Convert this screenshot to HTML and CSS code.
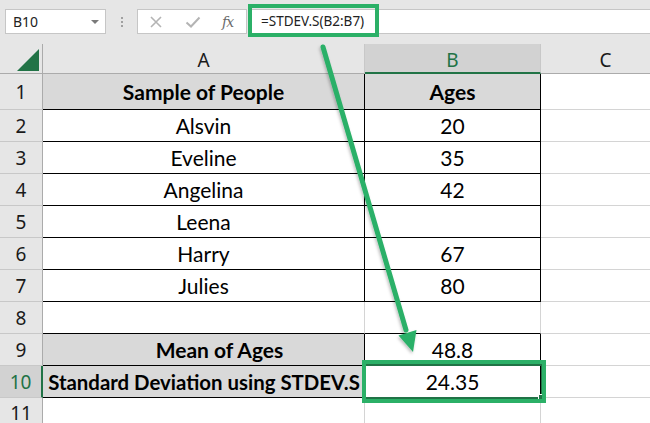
FILE: index.html
```html
<!DOCTYPE html>
<html>
<head>
<meta charset="utf-8">
<link rel="stylesheet" href="styles.css">
</head>
<body>
<div class="app">
  <div class="toolbar">
    <div class="namebox"><span>B10</span><span class="dd"></span></div>
    <div class="dots"><i></i><i></i><i></i></div>
    <div class="fbtns">
      <svg class="ic" width="14" height="14" viewBox="0 0 14 14"><path d="M2 2L12 12M12 2L2 12" stroke="#b4b4b4" stroke-width="1.6" fill="none"/></svg>
      <svg class="ic" width="16" height="14" viewBox="0 0 16 14"><path d="M1.5 7.5L6 11.5L14.5 2.5" stroke="#b4b4b4" stroke-width="2" fill="none"/></svg>
      <span class="fx">fx</span>
    </div>
    <div class="formula">=STDEV.S(B2:B7)</div>
  </div>
  <div class="sheet">
    <div class="corner"><span class="tri"></span></div>
    <div class="ch">A</div>
    <div class="ch sel">B</div>
    <div class="ch">C</div>

    <div class="rh">1</div>
    <div class="c t fill b">Sample of People</div>
    <div class="c t fill b">Ages</div>
    <div class="c g"></div>

    <div class="rh">2</div>
    <div class="c t">Alsvin</div>
    <div class="c t">20</div>
    <div class="c g"></div>

    <div class="rh">3</div>
    <div class="c t">Eveline</div>
    <div class="c t">35</div>
    <div class="c g"></div>

    <div class="rh">4</div>
    <div class="c t">Angelina</div>
    <div class="c t">42</div>
    <div class="c g"></div>

    <div class="rh">5</div>
    <div class="c t">Leena</div>
    <div class="c t"></div>
    <div class="c g"></div>

    <div class="rh">6</div>
    <div class="c t">Harry</div>
    <div class="c t">67</div>
    <div class="c g"></div>

    <div class="rh">7</div>
    <div class="c t">Julies</div>
    <div class="c t">80</div>
    <div class="c g"></div>

    <div class="rh">8</div>
    <div class="c t8"></div>
    <div class="c t8"></div>
    <div class="c g"></div>

    <div class="rh">9</div>
    <div class="c t fill b mean">Mean of Ages</div>
    <div class="c t">48.8</div>
    <div class="c g"></div>

    <div class="rh sel">10</div>
    <div class="c t fill b sd">Standard Deviation using STDEV.S</div>
    <div class="c t">24.35</div>
    <div class="c g"></div>

    <div class="rh last">11</div>
    <div class="c g"></div>
    <div class="c g"></div>
    <div class="c g"></div>
  </div>

  <div class="cursel"><span class="handle"></span></div>
  <div class="hl hl-formula"></div>
  <div class="hl hl-cell"></div>
  <svg class="arrow" width="650" height="423" viewBox="0 0 650 423">
    <defs>
      <filter id="sh" x="-20%" y="-20%" width="140%" height="140%">
        <feDropShadow dx="-1" dy="2" stdDeviation="1.5" flood-color="#000" flood-opacity="0.25"/>
      </filter>
    </defs>
    <g filter="url(#sh)">
      <line x1="323" y1="47" x2="406" y2="330" stroke="#2bb067" stroke-width="5" stroke-linecap="round"/>
      <polygon points="413,352 416.5,330 398.5,335.5" fill="#2bb067"/>
    </g>
  </svg>
</div>
</body>
</html>
```
FILE: styles.css
```css
html, body {
  margin: 0;
  padding: 0;
}
body {
  width: 650px;
  height: 423px;
  overflow: hidden;
  background: #e6e6e6;
  font-family: "Lato", "Liberation Sans", sans-serif;
}
.app {
  position: relative;
  width: 650px;
  height: 423px;
  overflow: hidden;
}
.toolbar {
  height: 44px;
  box-sizing: border-box;
  padding-top: 9px;
  display: flex;
  align-items: flex-start;
  background: #e6e6e6;
}
.namebox {
  margin-left: 5px;
  width: 101px;
  height: 25px;
  box-sizing: border-box;
  border: 1px solid #c6c6c6;
  background: #fff;
  display: flex;
  align-items: center;
  justify-content: space-between;
  padding: 0 6px 0 7px;
  font-family: "Noto Sans", "Liberation Sans", sans-serif;
  font-size: 14px;
  color: #222;
}
.dd {
  width: 0;
  height: 0;
  border-left: 4px solid transparent;
  border-right: 4px solid transparent;
  border-top: 4px solid #7a7a7a;
}
.dots {
  width: 31px;
  height: 25px;
  display: flex;
  flex-direction: column;
  align-items: center;
  justify-content: center;
  gap: 2px;
}
.dots i {
  display: block;
  width: 2px;
  height: 2px;
  background: #a0a0a0;
}
.fbtns {
  width: 110px;
  height: 25px;
  box-sizing: border-box;
  border: 1px solid #c6c6c6;
  background: #fff;
  display: flex;
  align-items: center;
  padding-left: 11px;
  gap: 22px;
}
.fx {
  font-family: "DejaVu Serif", "Liberation Serif", serif;
  font-style: italic;
  font-size: 14px;
  color: #6b6b6b;
  letter-spacing: -1px;
  margin-left: -1px;
}
.formula {
  flex: 1;
  height: 25px;
  margin-left: 1px;
  box-sizing: border-box;
  border-top: 1px solid #c6c6c6;
  border-bottom: 1px solid #c6c6c6;
  background: #fff;
  font-family: "Noto Sans", "Liberation Sans", sans-serif;
  font-size: 13.5px;
  color: #222;
  line-height: 23px;
  padding-left: 13px;
}
.sheet {
  display: grid;
  grid-template-columns: 43px 322px 176px 130px;
  grid-template-rows: 30px 36px repeat(10, 32px);
  background: #fff;
}
.sheet > div {
  box-sizing: border-box;
  display: flex;
  align-items: center;
  justify-content: center;
  overflow: hidden;
  white-space: nowrap;
}
.corner {
  background: #e6e6e6;
  border-right: 1px solid #ababab;
  border-bottom: 1px solid #ababab;
  position: relative;
}
.tri {
  position: absolute;
  left: 17px;
  top: 5px;
  width: 0;
  height: 0;
  border-left: 22px solid transparent;
  border-bottom: 22px solid #217346;
}
.ch {
  background: #e6e6e6;
  border-right: 1px solid #c8c8c8;
  border-bottom: 1px solid #ababab;
  font-family: "Noto Sans", "Liberation Sans", sans-serif;
  font-size: 19px;
  color: #1a1a1a;
  padding-top: 2px;
}
.ch.sel {
  background: #d2d2d2;
  color: #217346;
  border-bottom: 2px solid #217346;
  padding-top: 3px;
}
.rh {
  background: #e6e6e6;
  border-right: 1px solid #ababab;
  border-bottom: 1px solid #c8c8c8;
  font-family: "Noto Sans", "Liberation Sans", sans-serif;
  font-size: 19px;
  color: #1a1a1a;
}
.sheet > .rh.last {
  align-items: flex-start;
  padding-top: 2px;
}
.rh.sel {
  background: #d2d2d2;
  color: #217346;
  border-right: 2px solid #217346;
}
.c {
  font-size: 21px;
  color: #000;
}
.c.sd {
  font-size: 20.4px;
  padding-left: 1px;
}
.g {
  border-right: 1px solid #d4d4d4;
  border-bottom: 1px solid #d4d4d4;
}
.t {
  border-right: 1px solid #000;
  border-bottom: 1px solid #000;
}
.t8 {
  border-right: 1px solid #d4d4d4;
  border-bottom: 1px solid #000;
}
.fill {
  background: #d9d9d9;
}
.b {
  font-weight: 700;
}
.mean {
  padding-left: 32px;
}
.cursel {
  position: absolute;
  left: 363px;
  top: 364px;
  width: 180px;
  height: 35px;
  box-sizing: border-box;
  border: 2px solid #217346;
}
.handle {
  position: absolute;
  right: -4px;
  bottom: -4px;
  width: 5px;
  height: 5px;
  background: #217346;
  border: 1px solid #fff;
}
.hl {
  position: absolute;
  box-sizing: border-box;
  border: 4px solid #2bb067;
}
.hl-formula {
  left: 248px;
  top: 4px;
  width: 131px;
  height: 33px;
}
.hl-cell {
  left: 362px;
  top: 360px;
  width: 184px;
  height: 43px;
}
.arrow {
  position: absolute;
  left: 0;
  top: 0;
  pointer-events: none;
}
```
